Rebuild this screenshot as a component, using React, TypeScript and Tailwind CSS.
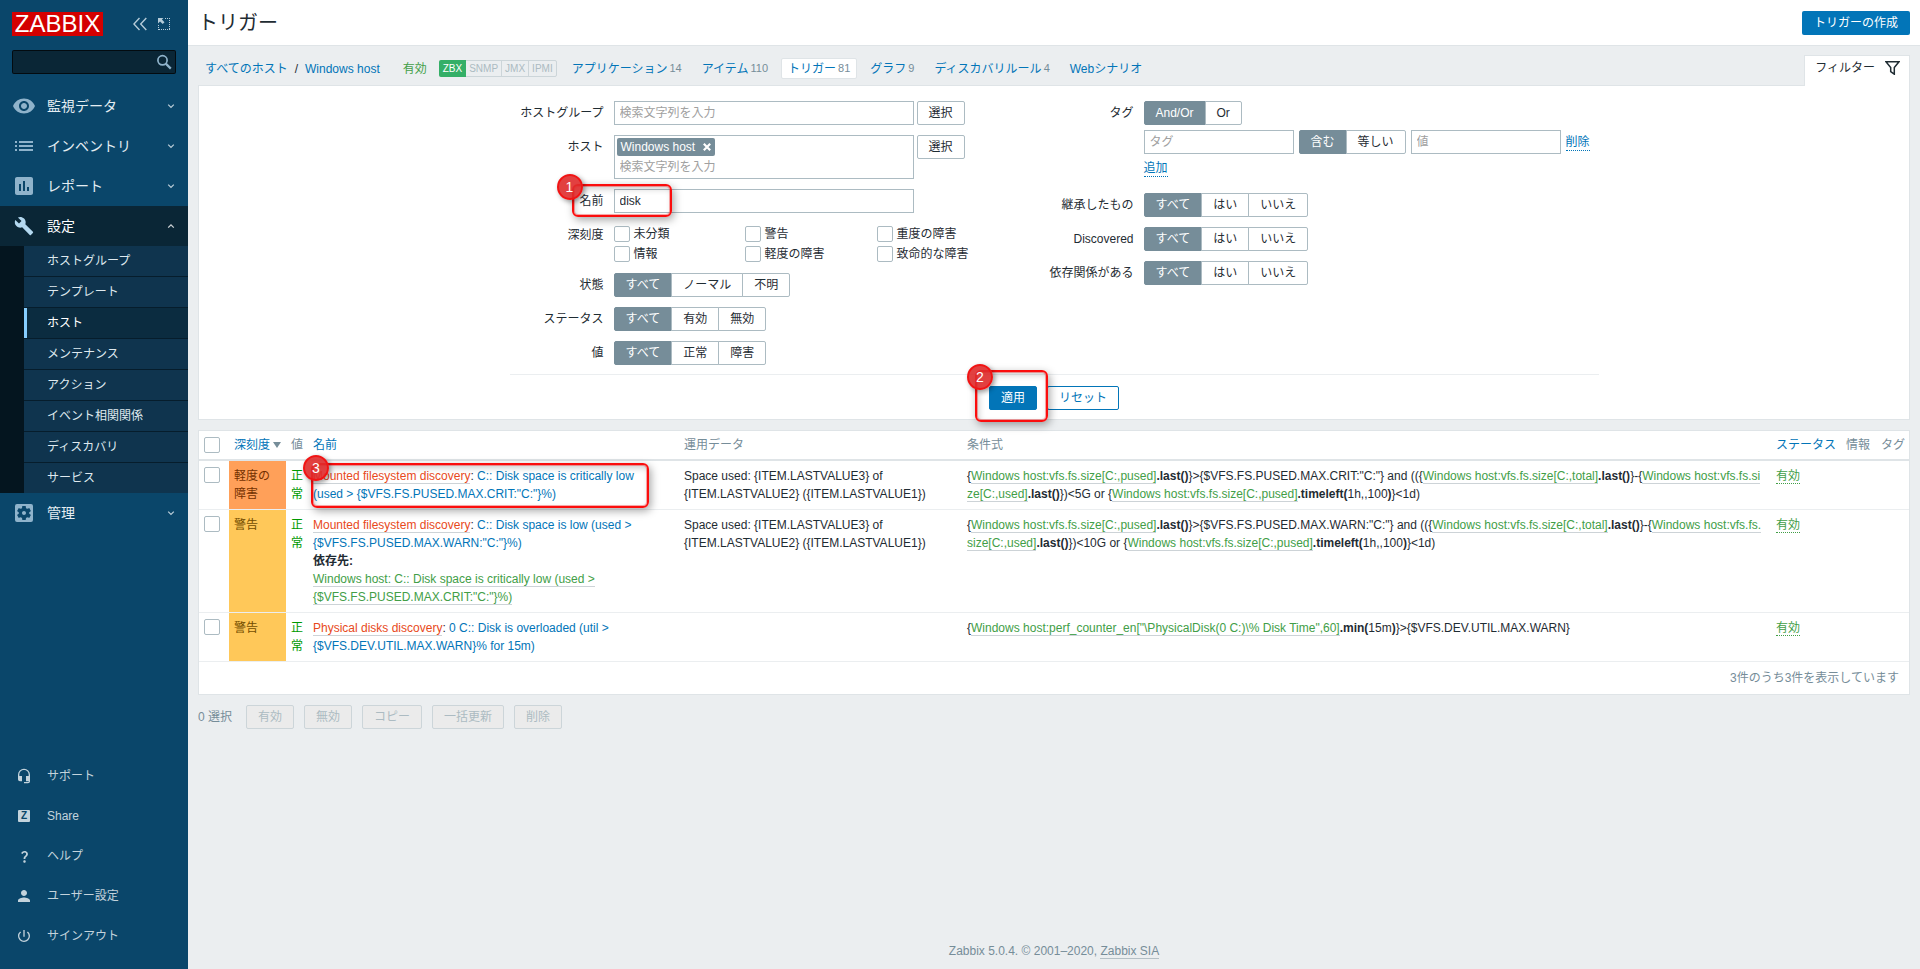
import React from "react";
import {
  MdAssessment,
  MdBuild,
  MdHeadsetMic,
  MdList,
  MdPerson,
  MdPowerSettingsNew,
  MdQuestionMark,
  MdSettingsApplications,
  MdVisibility,
} from "react-icons/md";

const inputClass =
  "h-6 border border-[#acbbc2] bg-white px-[5px] text-xs text-[#1f2c33] outline-none placeholder:text-[#a0a0a0]";

function Chevron({ up = false }: { up?: boolean }) {
  return (
    <svg className="ml-auto h-2 w-2 opacity-80" viewBox="0 0 8 8" fill="none" stroke="currentColor" strokeWidth="1.3">
      <path d={up ? "M1.2 5.6 4 2.8l2.8 2.8" : "M1.2 2.6 4 5.4l2.8-2.8"} />
    </svg>
  );
}

function Marker({ n, place }: { n: number; place: string }) {
  return (
    <span
      className={
        "absolute flex h-[26px] w-[26px] items-center justify-center rounded-full border-2 border-[#f01414] bg-[#df2b2b]/90 text-sm text-white shadow-[2px_2px_5px_rgba(0,0,0,0.4)] " +
        place
      }
    >
      {n}
    </span>
  );
}

const frameClass =
  "pointer-events-none absolute rounded-md border-2 border-[#fb0d0d] shadow-[2px_3px_8px_rgba(0,0,0,0.35),inset_0_0_0_1px_rgba(251,13,13,0.35),inset_2px_3px_6px_rgba(0,0,0,0.2)]";

function MenuItem({
  icon,
  label,
  active = false,
}: {
  icon: React.ReactNode;
  label: string;
  active?: boolean;
}) {
  return (
    <a
      href="#"
      className={
        "flex h-10 items-center pr-[13px] pl-3 text-sm " +
        (active ? "bg-[#0a2636] text-white" : "text-[#e4edf2]")
      }
    >
      <span className={"mr-[11px] flex w-6 justify-center " + (active ? "text-[#b3d8f0]" : "text-[#8fb3cb]")}>
        {icon}
      </span>
      {label}
      <Chevron up={active} />
    </a>
  );
}

const subItems = [
  "ホストグループ",
  "テンプレート",
  "ホスト",
  "メンテナンス",
  "アクション",
  "イベント相関関係",
  "ディスカバリ",
  "サービス",
];

const footerItems: { label: string; icon: React.ReactNode }[] = [
  { label: "サポート", icon: <MdHeadsetMic size={16} /> },
  {
    label: "Share",
    icon: (
      <span className="flex h-3 w-3 items-center justify-center rounded-[1px] bg-[#c3d3dc] text-[10px] leading-3 font-bold text-[#0a466a]">
        Z
      </span>
    ),
  },
  { label: "ヘルプ", icon: <MdQuestionMark size={15} /> },
  { label: "ユーザー設定", icon: <MdPerson size={18} /> },
  { label: "サインアウト", icon: <MdPowerSettingsNew size={16} /> },
];

function Sidebar() {
  return (
    <aside className="flex w-[188px] shrink-0 flex-col bg-[#0a466a]">
      <div className="flex items-center px-3 pt-3">
        <span className="flex h-6 w-[91px] items-center justify-center bg-[#d40000] text-2xl leading-6 text-white">
          ZABBIX
        </span>
        <button type="button" aria-label="Collapse" className="ml-[30px] text-[#b5cbd8]">
          <svg className="h-3.5 w-3.5" viewBox="0 0 14 14" fill="none" stroke="currentColor" strokeWidth="1.4">
            <path d="M6.5 1 .9 7l5.6 6M13.3 1 7.7 7l5.6 6" />
          </svg>
        </button>
        <button type="button" aria-label="Hide" className="ml-[11px] text-[#b5cbd8]">
          <svg className="h-3 w-3" viewBox="0 0 12 12" fill="none" stroke="currentColor">
            <path d="M7 .5h5M11.5 0v12M12 11.5H0M.5 12V6" strokeDasharray="1 1" />
            <path d="M0 0h5.5L3.9 1.6 6.5 4.2 4.7 6 2 3.4 0 5.4z" fill="currentColor" stroke="none" />
          </svg>
        </button>
      </div>
      <div className="mx-3 mt-3.5 mb-3 flex h-6 items-center rounded-[2px] border border-black/70 bg-[#0a2636] pr-[3px]">
        <input aria-label="検索" className="w-0 grow bg-transparent px-1 text-xs text-white outline-none" />
        <svg className="h-4 w-4 text-[#8fb3cb]" viewBox="0 0 16 16" fill="none" stroke="currentColor" strokeWidth="1.7">
          <circle cx="6.5" cy="6.3" r="4.6" />
          <path d="m9.8 9.6 5 5" strokeWidth="2.2" />
        </svg>
      </div>
      <nav>
        <MenuItem icon={<MdVisibility size={24} />} label="監視データ" />
        <MenuItem icon={<MdList size={24} />} label="インベントリ" />
        <MenuItem icon={<MdAssessment size={24} />} label="レポート" />
        <MenuItem icon={<MdBuild size={20} />} label="設定" active />
        <ul className="bg-[#04151f] pl-6">
          {subItems.map((item) => (
            <li key={item} className="border-b border-[#061d2c] last:border-b-0">
              <a
                href="#"
                className={
                  "flex h-[30px] items-center text-xs " +
                  (item === "ホスト"
                    ? "border-l-[3px] border-[#86ceff] bg-[#0b2c40] pl-5 text-white"
                    : "bg-[#0f344e] pl-[23px] text-[#dfe9ef]")
                }
              >
                {item}
              </a>
            </li>
          ))}
        </ul>
        <MenuItem icon={<MdSettingsApplications size={24} />} label="管理" />
      </nav>
      <ul className="mt-auto pb-[13px]">
        {footerItems.map((item) => (
          <li key={item.label}>
            <a href="#" className="flex h-10 items-center pl-3 text-xs text-[#c3d3dc]">
              <span className="mr-[11px] flex w-6 justify-center">{item.icon}</span>
              {item.label}
            </a>
          </li>
        ))}
      </ul>
    </aside>
  );
}

function Segmented({ name, label, options }: { name: string; label: string; options: string[] }) {
  return (
    <div role="radiogroup" aria-label={label} className="flex">
      {options.map((option, i) => (
        <label key={option} className="relative -ml-px first:ml-0 first:[&>span]:rounded-l-[2px] last:[&>span]:rounded-r-[2px]">
          <input type="radio" name={name} defaultChecked={i === 0} className="peer sr-only" />
          <span className="flex h-6 items-center border border-[#acbbc2] bg-white px-[11px] text-[#1f2c33] peer-checked:border-[#768d99] peer-checked:bg-[#768d99] peer-checked:text-white">
            {option}
          </span>
        </label>
      ))}
    </div>
  );
}

const checkboxClass =
  "block h-4 w-4 shrink-0 appearance-none rounded-[2px] border border-[#acbbc2] bg-white checked:bg-[#0275b8]";

function Check({ label }: { label: string }) {
  return (
    <label className="flex h-4 items-center gap-1">
      <input type="checkbox" className={checkboxClass} />
      {label}
    </label>
  );
}

function LeftRow({ label, htmlFor, children }: { label: string; htmlFor?: string; children: React.ReactNode }) {
  return (
    <div className="flex gap-2.5">
      <label htmlFor={htmlFor} className="w-[94px] shrink-0 text-right leading-6">
        {label}
      </label>
      {children}
    </div>
  );
}

function RightRow({ label, children }: { label: string; children: React.ReactNode }) {
  return (
    <div className="flex gap-2.5">
      <span className="w-[84px] shrink-0 text-right leading-6">{label}</span>
      {children}
    </div>
  );
}

function SelectButton() {
  return (
    <button type="button" className="h-6 rounded-[2px] border border-[#acbbc2] bg-white px-[11px]">
      選択
    </button>
  );
}

function Filter() {
  return (
    <form className="border border-[#dfe4e7] bg-white px-2.5 pt-[15px] pb-[9px]">
      <div className="mx-auto grid max-w-[1089px] grid-cols-[1fr_549px] border-b border-[#ebeef0] pb-[9px]">
        <div className="flex flex-col gap-2.5">
          <LeftRow label="ホストグループ" htmlFor="groups">
            <div className="flex gap-[3px]">
              <input id="groups" placeholder="検索文字列を入力" className={inputClass + " w-[300px]"} />
              <SelectButton />
            </div>
          </LeftRow>
          <LeftRow label="ホスト" htmlFor="hosts">
            <div className="flex gap-[3px]">
              <div className="h-11 w-[300px] border border-[#acbbc2] px-0.5 pt-0.5">
                <span className="flex h-[18px] w-fit items-center gap-2 rounded-[2px] bg-[#768d99] px-1 text-white">
                  Windows host
                  <button type="button" aria-label="削除">
                    <svg className="h-2 w-2" viewBox="0 0 8 8" stroke="currentColor" strokeWidth="2.2">
                      <path d="m.8.8 6.4 6.4M7.2.8.8 7.2" />
                    </svg>
                  </button>
                </span>
                <input
                  id="hosts"
                  placeholder="検索文字列を入力"
                  className="block h-[22px] w-full px-[3px] text-xs outline-none placeholder:text-[#a0a0a0]"
                />
              </div>
              <SelectButton />
            </div>
          </LeftRow>
          <div className="relative">
            <LeftRow label="名前" htmlFor="name">
              <input id="name" defaultValue="disk" className={inputClass + " w-[300px]"} />
            </LeftRow>
            <div className={frameClass + " -top-[5px] left-[62px] h-[33px] w-[100px]"}>
              <Marker n={1} place="-top-3 -left-[17px]" />
            </div>
          </div>
          <LeftRow label="深刻度">
            <div className="grid grid-cols-[131px_132px_auto] gap-y-1 pt-[3px] pb-px">
              <Check label="未分類" />
              <Check label="警告" />
              <Check label="重度の障害" />
              <Check label="情報" />
              <Check label="軽度の障害" />
              <Check label="致命的な障害" />
            </div>
          </LeftRow>
          <LeftRow label="状態">
            <Segmented name="state" label="状態" options={["すべて", "ノーマル", "不明"]} />
          </LeftRow>
          <LeftRow label="ステータス">
            <Segmented name="status" label="ステータス" options={["すべて", "有効", "無効"]} />
          </LeftRow>
          <LeftRow label="値">
            <Segmented name="value" label="値" options={["すべて", "正常", "障害"]} />
          </LeftRow>
        </div>
        <div className="flex flex-col gap-2.5">
          <RightRow label="タグ">
            <div className="flex flex-col gap-[5px]">
              <Segmented name="evaltype" label="タグ" options={["And/Or", "Or"]} />
              <div className="flex gap-[5px]">
                <input aria-label="タグ" placeholder="タグ" className={inputClass + " w-[150px]"} />
                <Segmented name="operator" label="条件" options={["含む", "等しい"]} />
                <input aria-label="値" placeholder="値" className={inputClass + " w-[150px]"} />
                <button type="button" className="mt-[3px] h-[18px] border-b border-dotted border-[#0275b8] leading-4 text-[#0275b8]">
                  削除
                </button>
              </div>
              <div className="h-6">
                <button type="button" className="h-[18px] border-b border-dotted border-[#0275b8] leading-4 text-[#0275b8]">
                  追加
                </button>
              </div>
            </div>
          </RightRow>
          <RightRow label="継承したもの">
            <Segmented name="inherited" label="継承したもの" options={["すべて", "はい", "いいえ"]} />
          </RightRow>
          <RightRow label="Discovered">
            <Segmented name="discovered" label="Discovered" options={["すべて", "はい", "いいえ"]} />
          </RightRow>
          <RightRow label="依存関係がある">
            <Segmented name="dependent" label="依存関係がある" options={["すべて", "はい", "いいえ"]} />
          </RightRow>
        </div>
      </div>
      <div className="mt-[11px] flex justify-center gap-2.5">
        <div className="relative">
          <button type="button" className="h-6 rounded-[2px] border border-[#0275b8] bg-[#0275b8] px-[11px] text-white">
            適用
          </button>
          <div className={frameClass + " -top-4 -left-3.5 z-10 h-[52px] w-[73px]"}>
            <Marker n={2} place="-top-2 -left-2.5" />
          </div>
        </div>
        <button type="button" className="h-6 rounded-[2px] border border-[#0275b8] bg-white px-[11px] text-[#0275b8]">
          リセット
        </button>
      </div>
    </form>
  );
}

function Item({ children }: { children: React.ReactNode }) {
  return (
    <a href="#" className="border-b border-[#cdd3d7] text-[#429e47]">
      {children}
    </a>
  );
}

function Discovery({ children }: { children: React.ReactNode }) {
  return (
    <a href="#" className="border-b border-[#cdd3d7] text-[#e8491b]">
      {children}
    </a>
  );
}

function Blue({ children }: { children: React.ReactNode }) {
  return (
    <a href="#" className="text-[#0275b8]">
      {children}
    </a>
  );
}

const rows: {
  severity: string;
  severityClass: string;
  name: React.ReactNode;
  data: React.ReactNode;
  expression: React.ReactNode;
}[] = [
  {
    severity: "軽度の障害",
    severityClass: "bg-[#ffa059] text-[#733100]",
    name: (
      <>
        <Discovery>Mounted filesystem discovery</Discovery>:{" "}
        <Blue>
          C:: Disk space is critically low
          <br />
          (used &gt; {'{$VFS.FS.PUSED.MAX.CRIT:"C:"}%)'}
        </Blue>
        <span className={frameClass + " top-0.5 left-[3px] z-10 h-[45px] w-[338px]"}>
          <Marker n={3} place="-top-2.5 -left-2.5" />
        </span>
      </>
    ),
    data: (
      <>
        Space used: {"{ITEM.LASTVALUE3}"} of
        <br />
        {"{ITEM.LASTVALUE2} ({ITEM.LASTVALUE1})"}
      </>
    ),
    expression: (
      <>
        {"{"}
        <Item>Windows host:vfs.fs.size[C:,pused]</Item>
        <b>.last()</b>
        {'}>{$VFS.FS.PUSED.MAX.CRIT:"C:"} and (({'}
        <Item>Windows host:vfs.fs.size[C:,total]</Item>
        <b>.last()</b>
        {"}-{"}
        <Item>
          Windows host:vfs.fs.si
          <br />
          ze[C:,used]
        </Item>
        <b>.last()</b>
        {"})<5G or {"}
        <Item>Windows host:vfs.fs.size[C:,pused]</Item>
        <b>.timeleft(</b>1h,,100<b>)</b>
        {"}<1d)"}
      </>
    ),
  },
  {
    severity: "警告",
    severityClass: "bg-[#ffc859] text-[#734d00]",
    name: (
      <>
        <Discovery>Mounted filesystem discovery</Discovery>:{" "}
        <Blue>
          C:: Disk space is low (used &gt;
          <br />
          {'{$VFS.FS.PUSED.MAX.WARN:"C:"}%)'}
        </Blue>
        <br />
        <b>依存先:</b>
        <br />
        <Item>
          Windows host: C:: Disk space is critically low (used &gt;
          <br />
          {'{$VFS.FS.PUSED.MAX.CRIT:"C:"}%)'}
        </Item>
      </>
    ),
    data: (
      <>
        Space used: {"{ITEM.LASTVALUE3}"} of
        <br />
        {"{ITEM.LASTVALUE2} ({ITEM.LASTVALUE1})"}
      </>
    ),
    expression: (
      <>
        {"{"}
        <Item>Windows host:vfs.fs.size[C:,pused]</Item>
        <b>.last()</b>
        {'}>{$VFS.FS.PUSED.MAX.WARN:"C:"} and (({'}
        <Item>Windows host:vfs.fs.size[C:,total]</Item>
        <b>.last()</b>
        {"}-{"}
        <Item>
          Windows host:vfs.fs.
          <br />
          size[C:,used]
        </Item>
        <b>.last()</b>
        {"})<10G or {"}
        <Item>Windows host:vfs.fs.size[C:,pused]</Item>
        <b>.timeleft(</b>1h,,100<b>)</b>
        {"}<1d)"}
      </>
    ),
  },
  {
    severity: "警告",
    severityClass: "bg-[#ffc859] text-[#734d00]",
    name: (
      <>
        <Discovery>Physical disks discovery</Discovery>:{" "}
        <Blue>
          0 C:: Disk is overloaded (util &gt;
          <br />
          {"{$VFS.DEV.UTIL.MAX.WARN}% for 15m)"}
        </Blue>
      </>
    ),
    data: null,
    expression: (
      <>
        {"{"}
        <Item>{'Windows host:perf_counter_en["\\PhysicalDisk(0 C:)\\% Disk Time",60]'}</Item>
        <b>.min(</b>15m<b>)</b>
        {"}>{$VFS.DEV.UTIL.MAX.WARN}"}
      </>
    ),
  },
];

const th = "px-[5px] py-[5px] font-normal whitespace-nowrap text-[#768d99]";
const td = "relative px-[5px] py-1.5";

function TriggerTable() {
  return (
    <div className="mt-2.5 border border-[#dfe4e7] bg-white">
      <table className="w-full table-fixed border-collapse text-left leading-[18px]">
        <colgroup>
          <col className="w-[30px]" />
          <col className="w-[57px]" />
          <col className="w-[22px]" />
          <col className="w-[371px]" />
          <col className="w-[283px]" />
          <col />
          <col className="w-[70px]" />
          <col className="w-[35px]" />
          <col className="w-[33px]" />
        </colgroup>
        <thead>
          <tr className="border-b-2 border-[#dfe4e7]">
            <th className={th}>
              <input type="checkbox" aria-label="すべて選択" className={checkboxClass} />
            </th>
            <th className={th}>
              <a href="#" className="inline-flex items-center gap-[3px] text-[#0275b8]">
                深刻度
                <svg className="h-1.5 w-2 shrink-0 fill-[#768d99]" viewBox="0 0 8 6">
                  <path d="M0 0h8L4 6z" />
                </svg>
              </a>
            </th>
            <th className={th}>値</th>
            <th className={th}>
              <Blue>名前</Blue>
            </th>
            <th className={th}>運用データ</th>
            <th className={th}>条件式</th>
            <th className={th}>
              <Blue>ステータス</Blue>
            </th>
            <th className={th}>情報</th>
            <th className={th}>タグ</th>
          </tr>
        </thead>
        <tbody className="align-top">
          {rows.map((row, i) => (
            <tr key={i} className="border-b border-[#ebeef0]">
              <td className={td}>
                <input type="checkbox" aria-label="選択" className={checkboxClass} />
              </td>
              <td className={td + " " + row.severityClass}>{row.severity}</td>
              <td className={td + " text-[#009900]"}>正常</td>
              <td className={td + " whitespace-nowrap"}>{row.name}</td>
              <td className={td + " whitespace-nowrap"}>{row.data}</td>
              <td className={td + " whitespace-nowrap"}>{row.expression}</td>
              <td className={td}>
                <a href="#" className="border-b border-dotted border-[#429e47] text-[#429e47]">
                  有効
                </a>
              </td>
              <td className={td} />
              <td className={td} />
            </tr>
          ))}
        </tbody>
      </table>
      <div className="px-2.5 py-[7px] text-right leading-[18px] text-[#768d99]">3件のうち3件を表示しています</div>
    </div>
  );
}

function Tab({ label, count, active = false }: { label: string; count?: number; active?: boolean }) {
  return (
    <a
      href="#"
      className={
        "flex h-[21px] items-center gap-0.5 rounded-[2px] border px-1.5 text-[#0275b8] " +
        (active ? "border-[#dfe4e7] bg-white" : "border-transparent")
      }
    >
      {label}
      {count !== undefined && <span className="text-[11px] text-[#768d99]">{count}</span>}
    </a>
  );
}

export default function App() {
  return (
    <div className="flex min-h-screen bg-[#ebeef0] font-['Liberation_Sans','Noto_Sans_CJK_JP',sans-serif] text-xs text-[#1f2c33]">
      <Sidebar />
      <main className="flex min-w-0 grow flex-col">
        <header className="flex h-[46px] items-center justify-between border-b border-[#dfe4e7] bg-white px-2.5">
          <h1 className="text-xl leading-7">トリガー</h1>
          <button type="button" className="h-6 rounded-[2px] bg-[#0275b8] px-3 text-white">
            トリガーの作成
          </button>
        </header>
        <div className="flex h-[39px] items-center px-2.5">
          <div className="flex grow items-center pt-1.5 pl-[7px] whitespace-nowrap">
            <Blue>すべてのホスト</Blue>
            <span className="px-[7px]">/</span>
            <Blue>Windows host</Blue>
            <span className="pr-3 pl-[23px] text-[#429e47]">有効</span>
            <span className="flex h-[17px] rounded-[2px] border border-[#ccd5d9] text-[10px] leading-[15px] text-[#acbbc2]">
              <span className="-my-px -ml-px rounded-l-[2px] bg-[#34af67] px-1 py-px text-white">ZBX</span>
              <span className="px-[3px]">SNMP</span>
              <span className="border-l border-[#ccd5d9] px-[3px]">JMX</span>
              <span className="border-l border-[#ccd5d9] px-[3px]">IPMI</span>
            </span>
            <nav className="flex gap-1.5 pl-2">
              <Tab label="アプリケーション" count={14} />
              <Tab label="アイテム" count={110} />
              <Tab label="トリガー" count={81} active />
              <Tab label="グラフ" count={9} />
              <Tab label="ディスカバリルール" count={4} />
              <Tab label="Webシナリオ" />
            </nav>
          </div>
          <button
            type="button"
            className="relative -mb-px flex h-[31px] items-center gap-2.5 self-end border border-b-0 border-[#dfe4e7] bg-white pr-[9px] pb-1.5 pl-2.5"
          >
            フィルター
            <svg className="h-3.5 w-[15px]" viewBox="0 0 15 14" fill="none" stroke="#1f2c33" strokeWidth="1.5">
              <path d="M1 .8h13L9.3 6.6v6.6L5.7 10.6v-4z" />
            </svg>
          </button>
        </div>
        <div className="px-2.5">
          <Filter />
          <TriggerTable />
          <div className="mt-2.5 flex items-center gap-2.5">
            <span className="pr-1 text-[#768d99]">0 選択</span>
            {["有効", "無効", "コピー", "一括更新", "削除"].map((label) => (
              <button
                key={label}
                type="button"
                disabled
                className="h-6 rounded-[2px] border border-[#ccd5d9] bg-[#ebebeb] px-[11px] text-[#acbbc2]"
              >
                {label}
              </button>
            ))}
          </div>
        </div>
        <footer className="mt-auto pb-[9px] text-center leading-[18px] text-[#768d99]">
          Zabbix 5.0.4. © 2001–2020,{" "}
          <a href="#" className="border-b border-[#b5c0c6]">
            Zabbix SIA
          </a>
        </footer>
      </main>
    </div>
  );
}
